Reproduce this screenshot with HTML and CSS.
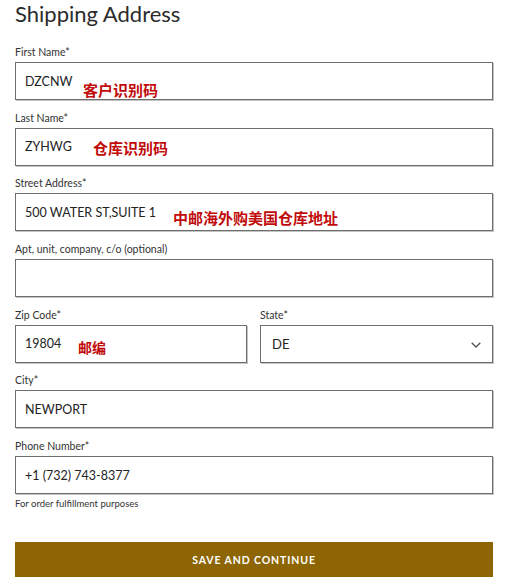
FILE: index.html
```html
<!DOCTYPE html>
<html lang="en">

<head>
    <meta charset="UTF-8">
    <meta name="viewport" content="width=device-width, initial-scale=1.0">
    <title>Shipping Address</title>
    <link rel="stylesheet" href="styles.css">
</head>

<body>
    <div class="checkout">
        <h1>Shipping Address</h1>
        <form class="address-form">
            <div class="field">
                <label for="firstName">First Name*</label>
                <div class="control">
                    <input type="text" id="firstName" value="DZCNW">
                    <span class="tip tip-first">客户识别码</span>
                </div>
            </div>

            <div class="field">
                <label for="lastName">Last Name*</label>
                <div class="control">
                    <input type="text" id="lastName" value="ZYHWG">
                    <span class="tip tip-last">仓库识别码</span>
                </div>
            </div>

            <div class="field">
                <label for="street">Street Address*</label>
                <div class="control">
                    <input type="text" id="street" value="500 WATER ST,SUITE 1">
                    <span class="tip tip-street">中邮海外购美国仓库地址</span>
                </div>
            </div>

            <div class="field">
                <label for="apt">Apt, unit, company, c/o (optional)</label>
                <div class="control">
                    <input type="text" id="apt" value="">
                </div>
            </div>

            <div class="field-row">
                <div class="field">
                    <label for="zip">Zip Code*</label>
                    <div class="control">
                        <input type="text" id="zip" value="19804">
                        <span class="tip tip-zip">邮编</span>
                    </div>
                </div>
                <div class="field">
                    <label for="state">State*</label>
                    <div class="control">
                        <select id="state">
                            <option>DE</option>
                        </select>
                        <svg class="chevron" width="10" height="6" viewBox="0 0 10 6">
                            <path d="M0.7 0.7 L5 5 L9.3 0.7" fill="none" stroke="#555" stroke-width="1.3" />
                        </svg>
                    </div>
                </div>
            </div>

            <div class="field">
                <label for="city">City*</label>
                <div class="control">
                    <input type="text" id="city" value="NEWPORT">
                </div>
            </div>

            <div class="field phone-field">
                <label for="phone">Phone Number*</label>
                <div class="control">
                    <input type="tel" id="phone" value="+1 (732) 743-8377">
                </div>
                <p class="hint">For order fulfillment purposes</p>
            </div>

            <button type="submit" class="save-button">SAVE AND CONTINUE</button>
        </form>
    </div>
</body>

</html>
```

FILE: styles.css
```css
/* Global Styles */
body {
    margin: 0;
    font-family: 'Lato', 'Noto Sans', sans-serif;
    background-color: #fff;
    color: #333;
}

.checkout {
    padding: 0 12px 0 15px;
}

.checkout h1 {
    margin: 0;
    font-size: 22px;
    line-height: 28px;
    font-weight: 400;
    color: #2b2b2b;
}

/* Address Form */
.address-form {
    margin-top: 18px;
}

.field {
    margin-bottom: 11.7px;
}

.field label {
    display: block;
    font-size: 10.5px;
    line-height: 13px;
    color: #333;
    margin-bottom: 3px;
}

.control {
    position: relative;
}

.control input,
.control select {
    display: block;
    width: 100%;
    height: 38px;
    box-sizing: border-box;
    border: 1px solid #6e6e6e;
    border-radius: 0;
    box-shadow: 1px 1px 0 #c4c4c4;
    background: #fff;
    padding: 0 9px;
    font-family: 'Lato', 'Noto Sans', sans-serif;
    font-size: 12.5px;
    color: #222;
    outline: none;
}

.control select {
    appearance: none;
    -webkit-appearance: none;
    padding-left: 11px;
    font-size: 13px;
}

.chevron {
    position: absolute;
    right: 12px;
    top: 17px;
}

.field-row {
    display: grid;
    grid-template-columns: 232px 1fr;
    column-gap: 13px;
}

/* Red notes drawn over the inputs */
.tip {
    position: absolute;
    font-family: 'Noto Sans CJK SC', sans-serif;
    font-size: 15px;
    line-height: 15px;
    font-weight: 700;
    color: #c10a0a;
    white-space: nowrap;
}

.tip-first {
    left: 68px;
    top: 20px;
}

.tip-last {
    left: 78px;
    top: 12px;
}

.tip-street {
    left: 158px;
    top: 17px;
}

.tip-zip {
    left: 63px;
    top: 15px;
    font-size: 14px;
}

.phone-field {
    margin-bottom: 0;
}

.hint {
    margin: 4px 0 0;
    font-size: 9.5px;
    line-height: 12px;
    color: #333;
}

.save-button {
    display: block;
    width: 100%;
    height: 35px;
    margin-top: 32px;
    border: none;
    background-color: #8d6502;
    color: #fff;
    font-family: 'Lato', 'Noto Sans', sans-serif;
    font-size: 10.5px;
    font-weight: 700;
    letter-spacing: 0.9px;
    cursor: pointer;
}
```
